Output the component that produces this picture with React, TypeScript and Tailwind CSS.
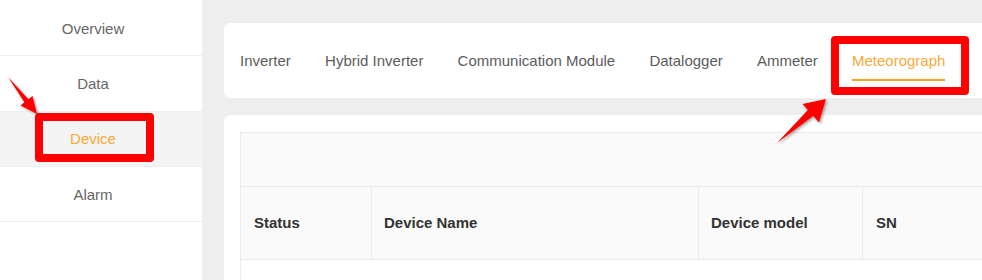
import React from "react";

const tabs = ["Inverter", "Hybrid Inverter", "Communication Module", "Datalogger", "Ammeter", "Meteorograph"];
const menu = ["Overview", "Data", "Device", "Alarm"];

export default function App() {
  return (
    <div
      className="relative flex w-[982px] h-[280px] overflow-hidden bg-[#eeeeee]"
      style={{ fontFamily: '"Liberation Sans", Arial, sans-serif' }}
    >
      {/* Sidebar */}
      <div className="w-[202px] shrink-0 bg-white flex flex-col pt-[1px]">
        {menu.map((m) => (
          <div
            key={m}
            className={`h-[55.25px] shrink-0 border-b border-[#efefef] flex items-center justify-center pr-[16px] pt-[2px] text-[15px] ${
              m === "Device" ? "bg-[#f4f4f4] text-[#f7a93a]" : "text-[#666666]"
            }`}
          >
            {m}
          </div>
        ))}
      </div>

      {/* Main */}
      <div className="flex-1 pl-[22px] pt-[23px] flex flex-col gap-[17px] min-w-0">
        <div className="h-[75px] shrink-0 bg-white rounded-l-[6px] flex items-center pl-[16px] pt-[2px] gap-[34.2px] text-[15px] text-[#5c5c5c] whitespace-nowrap">
          {tabs.map((t) =>
            t === "Meteorograph" ? (
              <div key={t} className="relative text-[#f7a93a]">
                {t}
                <div className="absolute left-0 right-0 top-[29px] h-[2px] bg-[#f5a623]" />
              </div>
            ) : (
              <div key={t}>{t}</div>
            )
          )}
        </div>
        <div className="flex-1 min-h-0 overflow-hidden bg-white rounded-tl-[6px] pl-[16px] pt-[17px]">
          <div className="w-[900px] border-l border-t border-[#ebebeb]">
            <div className="h-[54px] bg-[#fafafa] border-b border-[#ebebeb]" />
            <div className="flex h-[73px] bg-[#fafafa] border-b border-[#ebebeb] text-[15px] font-bold text-[#333333]">
              <div className="w-[131px] border-r border-[#ebebeb] flex items-center pl-[13px]">Status</div>
              <div className="w-[327px] border-r border-[#ebebeb] flex items-center pl-[12px]">Device Name</div>
              <div className="w-[164px] border-r border-[#ebebeb] flex items-center pl-[12px]">Device model</div>
              <div className="flex-1 flex items-center pl-[13px]">SN</div>
            </div>
            <div className="h-[40px]" />
          </div>
        </div>
      </div>

      {/* Annotation boxes */}
      <div className="absolute left-[35px] top-[113px] w-[119px] h-[49px] border-[8px] border-[#ff0000] rounded-[4px]" />
      <div className="absolute left-[831px] top-[36px] w-[138px] h-[59px] border-[8px] border-[#ff0000] rounded-[4px]" />

      {/* Annotation arrows */}
      <svg className="absolute left-0 top-0 pointer-events-none" width="982" height="280" viewBox="0 0 982 280">
        <defs>
          <filter id="sh" x="-50%" y="-50%" width="200%" height="200%">
            <feDropShadow dx="1.5" dy="1.5" stdDeviation="1" floodColor="#000" floodOpacity="0.35" />
          </filter>
        </defs>
        <polygon
          points="8,77 28.4,99.2 32.5,96 37,114 20.5,105.5 24.4,102.2"
          fill="#ff0000"
          filter="url(#sh)"
        />
        <polygon
          points="777,143 807.8,109.9 802.5,104 826,99 819,122.5 813.2,115.9"
          fill="#ff0000"
          filter="url(#sh)"
        />
      </svg>
    </div>
  );
}
